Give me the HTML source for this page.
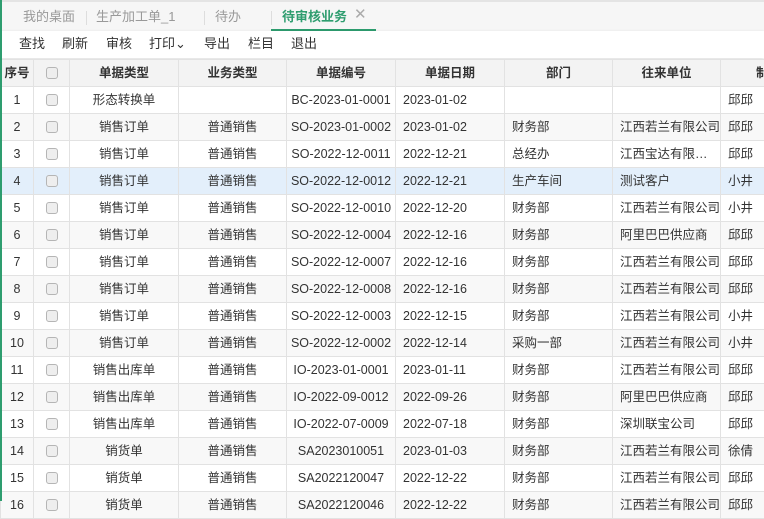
<!DOCTYPE html><html><head><meta charset="utf-8"><style>
*{margin:0;padding:0;box-sizing:border-box}
body{width:764px;height:501px;overflow:hidden;background:#fff;font-family:"Liberation Sans","Noto Sans CJK SC",sans-serif;font-size:13px;color:#333;position:relative}
.gl{position:absolute;left:0;top:0;width:2px;height:501px;background:#2e9d6f;z-index:5}
.tabs{position:absolute;top:0;left:0;width:764px;height:31px;background:#f6f6f6;border-top:2px solid #e4e4e4}
.tab{position:absolute;top:7px;color:#999;font-size:13px;line-height:16px}
.sep{position:absolute;top:9px;width:1px;height:14px;background:#ddd}
.act{color:#2e9d6f;font-weight:bold}
.ul{position:absolute;left:271px;top:27px;width:105px;height:2px;background:#2e9d6f}
.tb{position:absolute;top:31px;left:0;width:764px;height:27px;background:#fff;box-shadow:0 1px 3px rgba(0,0,0,.15)}
.tb span{position:absolute;top:4px;font-size:13px;color:#333;line-height:18px}
table{position:absolute;top:59px;left:0;border-collapse:collapse;table-layout:fixed;width:790px}
td,th{border:1px solid #e2e2e2;height:27px;line-height:25px;padding-top:0;padding-bottom:0;white-space:nowrap;overflow:hidden;font-size:12.5px;vertical-align:middle}
th{background:#f3f3f3;font-weight:bold;color:#333}
td{text-align:left;padding-left:7px;background:#fff}
td.c{text-align:center;padding-left:0;padding-right:0}
tr:nth-child(odd) td{background:#f8f8f8}
tr.hl td{background:#e3effb!important}
.cb{display:inline-block;width:12px;height:12px;border:1px solid #b5b5b5;border-radius:3px;background:#eee;vertical-align:middle}
</style></head><body>
<div class="gl"></div>
<div class="tabs">
<span class="tab" style="left:23px">我的桌面</span><span class="sep" style="left:86px"></span>
<span class="tab" style="left:96px">生产加工单_1</span><span class="sep" style="left:204px"></span>
<span class="tab" style="left:215px">待办</span><span class="sep" style="left:271px"></span>
<span class="tab act" style="left:282px">待审核业务</span><span class="tab" style="left:354px;font-size:15px;top:5px;color:#aaa">✕</span>
<div class="ul"></div>
</div>
<div class="tb"><span style="left:19px">查找</span><span style="left:62px">刷新</span><span style="left:106px">审核</span><span style="left:149px">打印⌄</span><span style="left:204px">导出</span><span style="left:248px">栏目</span><span style="left:291px">退出</span></div>
<table>
<colgroup><col style="width:33px"><col style="width:36px"><col style="width:109px"><col style="width:108px"><col style="width:109px"><col style="width:109px"><col style="width:108px"><col style="width:108px"><col style="width:70px"></colgroup>
<tr><th>序号</th><th><span class="cb"></span></th><th>单据类型</th><th>业务类型</th><th>单据编号</th><th>单据日期</th><th>部门</th><th>往来单位</th><th style="text-align:left;padding-left:35px">制</th></tr>
<tr><td class="c">1</td><td class="c"><span class="cb"></span></td><td class="c">形态转换单</td><td class="c"></td><td class="c">BC-2023-01-0001</td><td>2023-01-02</td><td></td><td></td><td>邱邱</td></tr>
<tr><td class="c">2</td><td class="c"><span class="cb"></span></td><td class="c">销售订单</td><td class="c">普通销售</td><td class="c">SO-2023-01-0002</td><td>2023-01-02</td><td>财务部</td><td>江西若兰有限公司</td><td>邱邱</td></tr>
<tr><td class="c">3</td><td class="c"><span class="cb"></span></td><td class="c">销售订单</td><td class="c">普通销售</td><td class="c">SO-2022-12-0011</td><td>2022-12-21</td><td>总经办</td><td>江西宝达有限…</td><td>邱邱</td></tr>
<tr class="hl"><td class="c">4</td><td class="c"><span class="cb"></span></td><td class="c">销售订单</td><td class="c">普通销售</td><td class="c">SO-2022-12-0012</td><td>2022-12-21</td><td>生产车间</td><td>测试客户</td><td>小井</td></tr>
<tr><td class="c">5</td><td class="c"><span class="cb"></span></td><td class="c">销售订单</td><td class="c">普通销售</td><td class="c">SO-2022-12-0010</td><td>2022-12-20</td><td>财务部</td><td>江西若兰有限公司</td><td>小井</td></tr>
<tr><td class="c">6</td><td class="c"><span class="cb"></span></td><td class="c">销售订单</td><td class="c">普通销售</td><td class="c">SO-2022-12-0004</td><td>2022-12-16</td><td>财务部</td><td>阿里巴巴供应商</td><td>邱邱</td></tr>
<tr><td class="c">7</td><td class="c"><span class="cb"></span></td><td class="c">销售订单</td><td class="c">普通销售</td><td class="c">SO-2022-12-0007</td><td>2022-12-16</td><td>财务部</td><td>江西若兰有限公司</td><td>邱邱</td></tr>
<tr><td class="c">8</td><td class="c"><span class="cb"></span></td><td class="c">销售订单</td><td class="c">普通销售</td><td class="c">SO-2022-12-0008</td><td>2022-12-16</td><td>财务部</td><td>江西若兰有限公司</td><td>邱邱</td></tr>
<tr><td class="c">9</td><td class="c"><span class="cb"></span></td><td class="c">销售订单</td><td class="c">普通销售</td><td class="c">SO-2022-12-0003</td><td>2022-12-15</td><td>财务部</td><td>江西若兰有限公司</td><td>小井</td></tr>
<tr><td class="c">10</td><td class="c"><span class="cb"></span></td><td class="c">销售订单</td><td class="c">普通销售</td><td class="c">SO-2022-12-0002</td><td>2022-12-14</td><td>采购一部</td><td>江西若兰有限公司</td><td>小井</td></tr>
<tr><td class="c">11</td><td class="c"><span class="cb"></span></td><td class="c">销售出库单</td><td class="c">普通销售</td><td class="c">IO-2023-01-0001</td><td>2023-01-11</td><td>财务部</td><td>江西若兰有限公司</td><td>邱邱</td></tr>
<tr><td class="c">12</td><td class="c"><span class="cb"></span></td><td class="c">销售出库单</td><td class="c">普通销售</td><td class="c">IO-2022-09-0012</td><td>2022-09-26</td><td>财务部</td><td>阿里巴巴供应商</td><td>邱邱</td></tr>
<tr><td class="c">13</td><td class="c"><span class="cb"></span></td><td class="c">销售出库单</td><td class="c">普通销售</td><td class="c">IO-2022-07-0009</td><td>2022-07-18</td><td>财务部</td><td>深圳联宝公司</td><td>邱邱</td></tr>
<tr><td class="c">14</td><td class="c"><span class="cb"></span></td><td class="c">销货单</td><td class="c">普通销售</td><td class="c">SA2023010051</td><td>2023-01-03</td><td>财务部</td><td>江西若兰有限公司</td><td>徐倩</td></tr>
<tr><td class="c">15</td><td class="c"><span class="cb"></span></td><td class="c">销货单</td><td class="c">普通销售</td><td class="c">SA2022120047</td><td>2022-12-22</td><td>财务部</td><td>江西若兰有限公司</td><td>邱邱</td></tr>
<tr><td class="c">16</td><td class="c"><span class="cb"></span></td><td class="c">销货单</td><td class="c">普通销售</td><td class="c">SA2022120046</td><td>2022-12-22</td><td>财务部</td><td>江西若兰有限公司</td><td>邱邱</td></tr>
</table>
</body></html>
